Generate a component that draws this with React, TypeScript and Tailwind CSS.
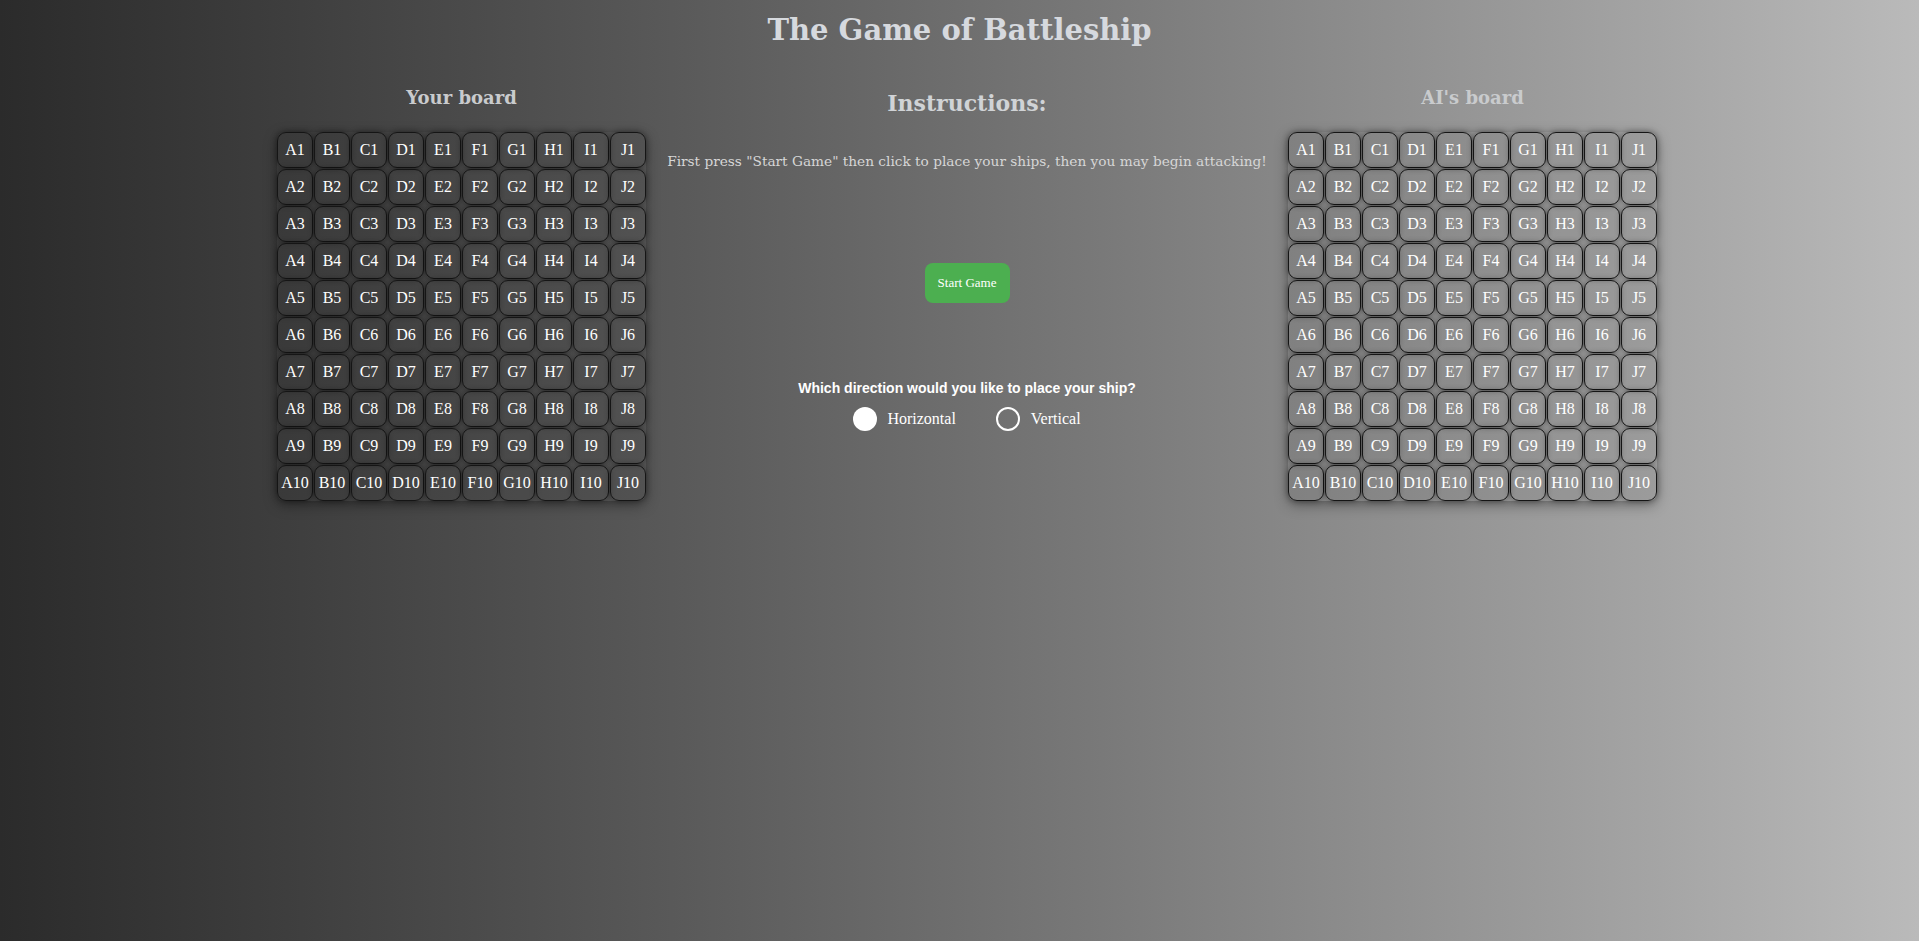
const cols = ['A', 'B', 'C', 'D', 'E', 'F', 'G', 'H', 'I', 'J'];
const rows = [1, 2, 3, 4, 5, 6, 7, 8, 9, 10];

const serifHead = { fontFamily: '"DejaVu Serif", Georgia, serif' };

function Board({ title }: { title: string }) {
  return (
    <div className="flex flex-col items-center w-[369px]">
      <h2 className="text-[18px] leading-[24px] font-bold text-[#c9cbcd] font-['DejaVu_Serif',Georgia,serif]">
        {title}
      </h2>
      <div className="mt-[22px] grid grid-cols-10 gap-[1px] shadow-[0_4px_14px_rgba(0,0,0,0.35)] rounded-lg">
        {rows.map((r) =>
          cols.map((c) => (
            <div
              key={c + r}
              className="w-[36px] h-[36px] flex items-center justify-center rounded-[9px] border border-[#151515] bg-black/5 shadow-[0_0_6px_rgba(0,0,0,0.45)] text-white text-[16px] font-['Liberation_Serif',serif]"
            >
              {c}
              {r}
            </div>
          ))
        )}
      </div>
    </div>
  );
}

export default function App() {
  return (
    <div className="min-h-[941px] w-full bg-gradient-to-r from-[#2b2b2b] to-[#bababa]">
      <h1
        className="pt-[10px] text-center text-[29px] leading-[40px] font-bold text-[#d6d9de]"
        style={serifHead}
      >
        The Game of Battleship
      </h1>
      <div className="mt-[36px] flex justify-center gap-[21px] pl-[15px]">
        <Board title="Your board" />
        <div className="w-[600px] flex flex-col items-center pt-[2px]">
          <h2 className="text-[22px] leading-[30px] font-bold text-[#d0d3d6] font-['DejaVu_Serif',Georgia,serif]">
            Instructions:
          </h2>
          <p className="mt-[33px] text-[13.7px] leading-[20px] text-[#d6d6d6] whitespace-nowrap font-['DejaVu_Serif',Georgia,serif]">
            First press "Start Game" then click to place your ships, then you may begin attacking!
          </p>
          <button className="mt-[92px] w-[85px] h-[40px] rounded-lg bg-[#4caf50] text-white text-[13px] font-['Liberation_Serif',serif]">
            Start Game
          </button>
          <p className="mt-[75px] text-[14px] leading-[20px] font-bold text-white font-['Liberation_Sans',Arial,sans-serif]">
            Which direction would you like to place your ship?
          </p>
          <div className="mt-[9px] flex items-center text-white text-[16px] font-['Liberation_Serif',serif]">
            <label className="flex items-center gap-[10px]">
              <span className="w-[24px] h-[24px] rounded-full bg-white" />
              Horizontal
            </label>
            <label className="ml-[40px] flex items-center gap-[11px]">
              <span className="w-[24px] h-[24px] rounded-full border-2 border-white" />
              Vertical
            </label>
          </div>
        </div>
        <Board title="AI's board" />
      </div>
    </div>
  );
}
